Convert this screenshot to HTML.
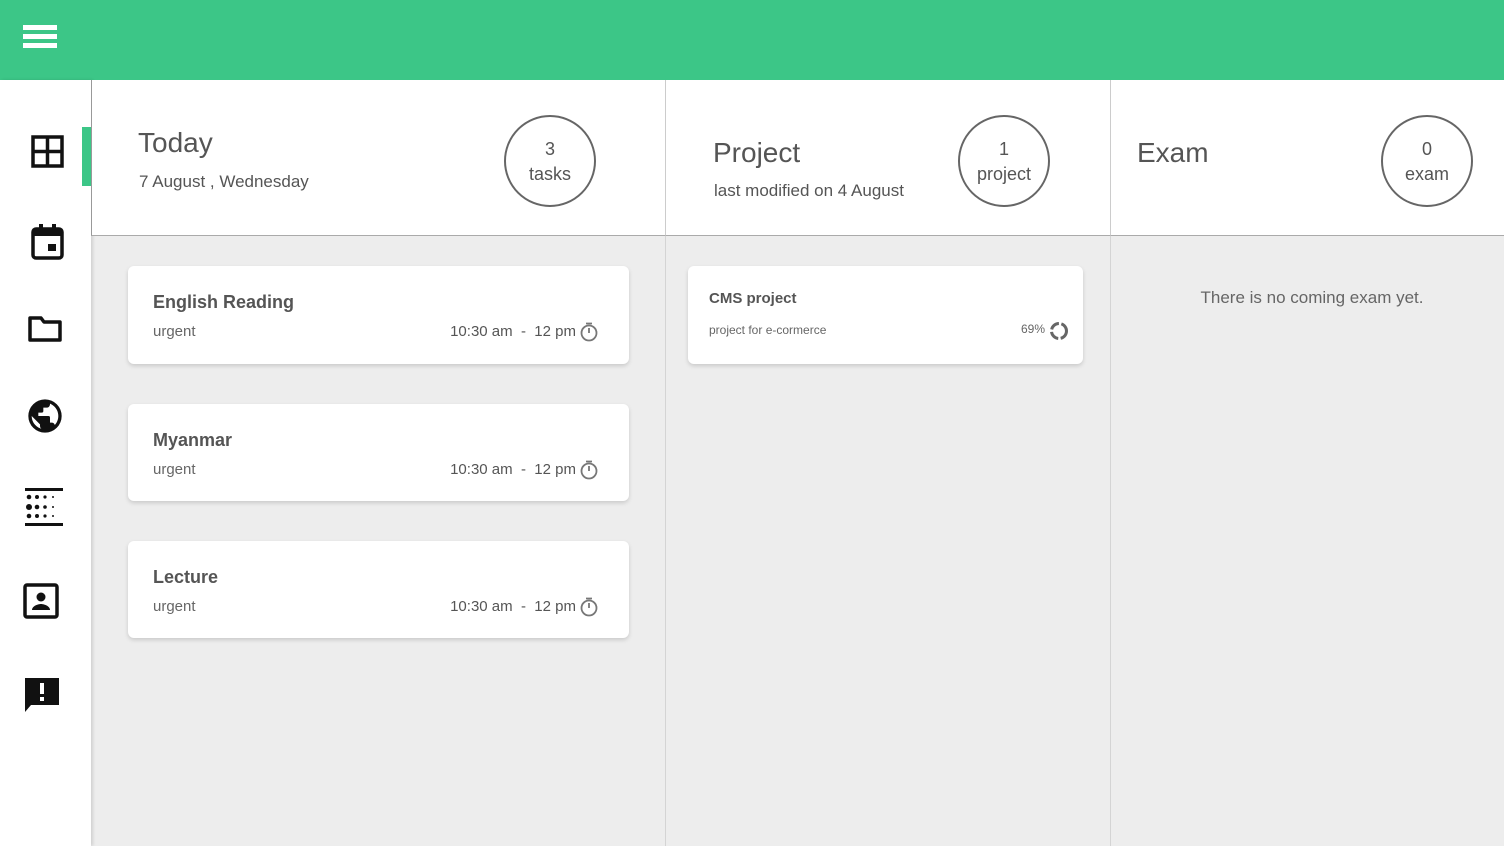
<!DOCTYPE html>
<html><head><style>
*{margin:0;padding:0;box-sizing:border-box}
body{width:1504px;height:846px;overflow:hidden;font-family:"Liberation Sans",sans-serif;background:#ededed;position:relative;color:#555}
.hdr{position:absolute;left:0;top:0;width:1504px;height:80px;background:#3cc687}
.hb{position:absolute;left:23px;width:34px;height:5px;background:#fff}
.side{position:absolute;left:0;top:80px;width:91px;height:766px;background:#fff;box-shadow:2px 0 3px rgba(0,0,0,.12)}
.ind{position:absolute;left:82px;top:127px;width:9px;height:59px;background:#3cc687}
.ic{position:absolute}
.top{position:absolute;top:80px;height:156px;background:#fff;border-bottom:1px solid #aaa;border-left:1px solid #ccc}
.col{position:absolute;top:236px;height:610px;border-left:1px solid #d4d4d4}
.h1{position:absolute;font-size:28px;color:#555}
.sub{position:absolute;font-size:17px;color:#555}
.circ{position:absolute;width:92px;height:92px;border:2px solid #666;border-radius:50%;text-align:center;font-size:18px;color:#555;line-height:25px;padding-top:20px}
.card{position:absolute;left:128px;width:501px;height:98px;background:#fff;border-radius:6px;box-shadow:0 2px 4px rgba(0,0,0,.15)}
.card b{position:absolute;left:25px;top:26px;font-size:18px;color:#555}
.card .u{position:absolute;left:25px;top:57px;font-size:15px;color:#666}
.card .t{position:absolute;right:53px;top:57px;font-size:15px;color:#555}
.card svg{position:absolute;right:30px;top:56px}
</style></head><body>
<div class="hdr"><div class="hb" style="top:25px"></div><div class="hb" style="top:34px"></div><div class="hb" style="top:43px"></div></div>
<div class="side"></div>
<div class="ind"></div>
<svg class="ic" style="left:31px;top:135px" width="33" height="33" viewBox="0 0 33 33"><path d="M2 2h29v29H2zM16.5 2v29M2 16.5h29" fill="none" stroke="#111" stroke-width="3.5"/></svg>
<svg class="ic" style="left:31px;top:224px" width="33" height="36" viewBox="0 0 33 36"><rect x="2" y="5" width="29" height="29" rx="3" fill="none" stroke="#111" stroke-width="3.5"/><rect x="2" y="5" width="29" height="7" fill="#111"/><rect x="8" y="0" width="4" height="7" fill="#111"/><rect x="21" y="0" width="4" height="7" fill="#111"/><rect x="17" y="20" width="8" height="7" fill="#111"/></svg>
<svg class="ic" style="left:28px;top:316px" width="34" height="26" viewBox="0 0 34 26"><path d="M2 2h11l3 4h16v18H2z" fill="none" stroke="#111" stroke-width="3.5" stroke-linejoin="round"/></svg>
<svg class="ic" style="left:25px;top:396px" width="40" height="40" viewBox="0 0 24 24"><path fill="#111" d="M12 2a10 10 0 100 20 10 10 0 000-20zm-1 17.9A8 8 0 014 12l5 5v1a2 2 0 002 2zm6.9-2.5A2 2 0 0016 16h-1v-3a1 1 0 00-1-1H8v-2h2a1 1 0 001-1V7h2a2 2 0 002-2v-.4a8 8 0 012.9 12.8z"/></svg>
<svg class="ic" style="left:25px;top:488px" width="38" height="38" viewBox="0 0 38 38"><rect x="0" y="0" width="38" height="3" fill="#111"/><rect x="0" y="35" width="38" height="3" fill="#111"/><g fill="#111"><circle cx="4" cy="9" r="2.3"/><circle cx="4" cy="19" r="3"/><circle cx="4" cy="28" r="2.3"/><circle cx="12" cy="9" r="2"/><circle cx="12" cy="19" r="2.3"/><circle cx="12" cy="28" r="2"/><circle cx="20" cy="9" r="1.6"/><circle cx="20" cy="19" r="1.8"/><circle cx="20" cy="28" r="1.6"/><circle cx="28" cy="9" r="1"/><circle cx="28" cy="19" r="1"/><circle cx="28" cy="28" r="1"/></g></svg>
<svg class="ic" style="left:23px;top:583px" width="36" height="36" viewBox="0 0 36 36"><rect x="2" y="2" width="32" height="32" rx="2" fill="none" stroke="#111" stroke-width="3.5"/><circle cx="18" cy="14" r="4.5" fill="#111"/><path d="M9 27c0-4 6-6 9-6s9 2 9 6z" fill="#111"/></svg>
<svg class="ic" style="left:23px;top:676px" width="38" height="38" viewBox="0 0 38 38"><path d="M2 2h34v27H8l-6 7z" fill="#111"/><rect x="17" y="7" width="4" height="11" fill="#fff"/><rect x="17" y="21" width="4" height="4" fill="#fff"/></svg>

<div class="top" style="left:91px;width:575px;border-left:1px solid #999"></div>
<div class="top" style="left:665px;width:446px"></div>
<div class="top" style="left:1110px;width:394px"></div>
<div class="col" style="left:665px"></div><div class="col" style="left:1110px"></div>

<div class="h1" style="left:138px;top:127px">Today</div>
<div class="sub" style="left:139px;top:172px">7 August , Wednesday</div>
<div class="circ" style="left:504px;top:115px">3<br>tasks</div>
<div class="h1" style="left:713px;top:137px">Project</div>
<div class="sub" style="left:714px;top:181px">last modified on 4 August</div>
<div class="circ" style="left:958px;top:115px">1<br>project</div>
<div class="h1" style="left:1137px;top:137px">Exam</div>
<div class="circ" style="left:1381px;top:115px">0<br>exam</div>

<div class="card" style="top:266px"><b>English Reading</b><span class="u">urgent</span><span class="t">10:30 am &nbsp;- &nbsp;12 pm</span><svg width="20" height="20" viewBox="0 0 20 20"><circle cx="10" cy="11" r="7.5" fill="none" stroke="#777" stroke-width="1.8"/><path d="M7 1.5h6M10 11V6" stroke="#777" stroke-width="1.8"/></svg></div>
<div class="card" style="top:404px;height:97px"><b>Myanmar</b><span class="u">urgent</span><span class="t">10:30 am &nbsp;- &nbsp;12 pm</span><svg width="20" height="20" viewBox="0 0 20 20"><circle cx="10" cy="11" r="7.5" fill="none" stroke="#777" stroke-width="1.8"/><path d="M7 1.5h6M10 11V6" stroke="#777" stroke-width="1.8"/></svg></div>
<div class="card" style="top:541px;height:97px"><b>Lecture</b><span class="u">urgent</span><span class="t">10:30 am &nbsp;- &nbsp;12 pm</span><svg width="20" height="20" viewBox="0 0 20 20"><circle cx="10" cy="11" r="7.5" fill="none" stroke="#777" stroke-width="1.8"/><path d="M7 1.5h6M10 11V6" stroke="#777" stroke-width="1.8"/></svg></div>

<div class="card" style="left:688px;width:395px;top:266px">
<b style="font-size:15px;left:21px;top:24px">CMS project</b>
<span class="u" style="font-size:12px;left:21px;top:57px">project for e-cormerce</span>
<span style="position:absolute;right:38px;top:56px;font-size:12px;color:#666">69%</span>
<svg style="right:14px;top:55px" width="20" height="20" viewBox="0 0 20 20"><circle cx="10" cy="10" r="7.5" fill="none" stroke="#666" stroke-width="3" stroke-dasharray="10 2.5"/></svg>
</div>
<div style="position:absolute;left:1110px;width:404px;top:288px;text-align:center;font-size:17px;color:#666">There is no coming exam yet.</div>
</body></html>
